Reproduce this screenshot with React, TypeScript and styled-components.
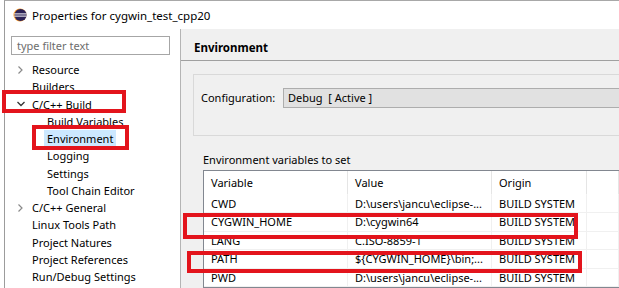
import React from 'react';
import styled, { createGlobalStyle } from 'styled-components';

const GlobalStyle = createGlobalStyle`
  html, body { margin: 0; padding: 0; background: #fff; overflow: hidden; }
  body {
    font-family: "Noto Sans", "Open Sans", sans-serif;
    font-size: 11px;
    color: #000;
  }
  * { box-sizing: border-box; }
`;

const Screen = styled.div`
  position: relative;
  width: 619px;
  height: 288px;
  padding-left: 4px;
  background: #fff;
  overflow: hidden;
`;

const Window = styled.div`
  display: flex;
  flex-direction: column;
  height: 100%;
  border-left: 1px solid #9c9c9c;
  border-top: 1px solid #a8a8a8;
`;

const TitleBar = styled.div`
  display: flex;
  align-items: center;
  gap: 5px;
  height: 28px;
  padding-left: 8px;
  font-size: 11.5px;
  background: #fff;
  white-space: nowrap;
`;

const Body = styled.div`
  display: flex;
  flex: 1;
  min-height: 0;
`;

const LeftPane = styled.div`
  width: 176px;
  flex-shrink: 0;
  padding: 7px 0 0 6px;
  background: #fff;
  border-right: 1px solid #b4b4b4;
`;

const Filter = styled.div`
  width: 159px;
  height: 19px;
  border: 1px solid #a6a6a6;
  padding-left: 5px;
  line-height: 17px;
  color: #6d6d6d;
`;

const Tree = styled.div`
  margin: 6px 0 0 -6px;
`;

const TreeRow = styled.div<{ $level: number }>`
  display: flex;
  align-items: center;
  height: 17.25px;
  padding-left: ${p => 11 + p.$level * 15}px;
  white-space: nowrap;
`;

const Chevron = styled.span`
  display: flex;
  align-items: center;
  width: 16px;
  height: 100%;
`;

const TreeLabel = styled.span<{ $selected?: boolean }>`
  display: flex;
  align-items: center;
  height: 100%;
  margin-left: -3px;
  padding: 0 3px;
  background: ${p => (p.$selected ? '#cce8ff' : 'transparent')};
`;

const RightPane = styled.div`
  flex: 1;
  min-width: 0;
  display: flex;
  flex-direction: column;
  background: #f0f0f0;
  overflow: hidden;
`;

const PageTitle = styled.div`
  height: 35px;
  padding: 11px 13px 0;
  font-size: 11.5px;
  font-weight: bold;
  line-height: 16px;
  border-bottom: 1px solid #a0a0a0;
`;

const Content = styled.div`
  padding: 13px 0 0 12px;
`;

const Group = styled.div`
  display: flex;
  align-items: flex-start;
  height: 62px;
  padding: 13px 0 0 7px;
  border: 1px solid #d9d9d9;
  border-right: none;
`;

const FieldLabel = styled.div`
  width: 82px;
  height: 20px;
  line-height: 20px;
  white-space: nowrap;
`;

const Combo = styled.div`
  flex: 1;
  height: 20px;
  padding-left: 4px;
  line-height: 18px;
  background: #e1e1e1;
  border: 1px solid #adadad;
  border-right: none;
  white-space: pre;
`;

const SectionLabel = styled.div`
  margin: 16px 0 0 10px;
  line-height: 16px;
`;

const Table = styled.div`
  display: grid;
  grid-template-columns: 144px 144px 95px 1fr;
  margin: 2px 0 0 10px;
  background: #fff;
  border: 1px solid #828790;
  border-right: none;
`;

const Cell = styled.div<{ $head?: boolean }>`
  display: flex;
  align-items: center;
  height: ${p => (p.$head ? '24px' : '18.5px')};
  padding-left: 7px;
  white-space: nowrap;
  overflow: hidden;
  border-right: 1px solid ${p => (p.$head ? '#e5e5e5' : '#f0f0f0')};
  border-bottom: 1px solid ${p => (p.$head ? 'transparent' : '#f0f0f0')};
`;

const Mark = styled.div`
  position: absolute;
  border: 4px solid #e3141c;
  pointer-events: none;
`;

const EclipseIcon = () => (
  <svg width="14" height="14" viewBox="0 0 14 14">
    <circle cx="7" cy="7" r="6.5" fill="#f7941e" />
    <circle cx="7.6" cy="7" r="6.1" fill="#2c2255" />
    <rect x="1.2" y="5.4" width="12.6" height="1" fill="#fff" />
    <rect x="1.2" y="7.6" width="12.6" height="1" fill="#fff" />
  </svg>
);

const ChevronRight = () => (
  <svg width="8" height="10" viewBox="0 0 8 10">
    <polyline points="2.5,1.5 6,5 2.5,8.5" fill="none" stroke="#8a8a8a" strokeWidth="1.2" />
  </svg>
);

const ChevronDown = () => (
  <svg width="10" height="8" viewBox="0 0 10 8">
    <polyline points="1.5,2 5,5.5 8.5,2" fill="none" stroke="#333" strokeWidth="1.3" />
  </svg>
);

type Node = { label: string; level: number; state?: 'open' | 'closed'; selected?: boolean };

const tree: Node[] = [
  { label: 'Resource', level: 0, state: 'closed' },
  { label: 'Builders', level: 0 },
  { label: 'C/C++ Build', level: 0, state: 'open' },
  { label: 'Build Variables', level: 1 },
  { label: 'Environment', level: 1, selected: true },
  { label: 'Logging', level: 1 },
  { label: 'Settings', level: 1 },
  { label: 'Tool Chain Editor', level: 1 },
  { label: 'C/C++ General', level: 0, state: 'closed' },
  { label: 'Linux Tools Path', level: 0 },
  { label: 'Project Natures', level: 0 },
  { label: 'Project References', level: 0 },
  { label: 'Run/Debug Settings', level: 0 },
];

const vars = [
  ['CWD', 'D:\\users\\jancu\\eclipse-...', 'BUILD SYSTEM'],
  ['CYGWIN_HOME', 'D:\\cygwin64', 'BUILD SYSTEM'],
  ['LANG', 'C.ISO-8859-1', 'BUILD SYSTEM'],
  ['PATH', '${CYGWIN_HOME}\\bin;...', 'BUILD SYSTEM'],
  ['PWD', 'D:\\users\\jancu\\eclipse-...', 'BUILD SYSTEM'],
];

const App = () => {
  return (
    <Screen>
      <GlobalStyle />
      <Window>
        <TitleBar>
          <EclipseIcon />
          <span>Properties for cygwin_test_cpp20</span>
        </TitleBar>
        <Body>
          <LeftPane>
            <Filter>type filter text</Filter>
            <Tree>
              {tree.map(n => (
                <TreeRow key={n.label} $level={n.level}>
                  <Chevron>
                    {n.state === 'closed' && <ChevronRight />}
                    {n.state === 'open' && <ChevronDown />}
                  </Chevron>
                  <TreeLabel $selected={n.selected}>{n.label}</TreeLabel>
                </TreeRow>
              ))}
            </Tree>
          </LeftPane>
          <RightPane>
            <PageTitle>Environment</PageTitle>
            <Content>
              <Group>
                <FieldLabel>Configuration:</FieldLabel>
                <Combo>{'Debug  [ Active ]'}</Combo>
              </Group>
              <SectionLabel>Environment variables to set</SectionLabel>
              <Table>
                <Cell $head>Variable</Cell>
                <Cell $head>Value</Cell>
                <Cell $head>Origin</Cell>
                <Cell $head />
                {vars.map(row => (
                  <React.Fragment key={row[0]}>
                    <Cell>{row[0]}</Cell>
                    <Cell>{row[1]}</Cell>
                    <Cell>{row[2]}</Cell>
                    <Cell />
                  </React.Fragment>
                ))}
              </Table>
            </Content>
          </RightPane>
        </Body>
      </Window>
      <Mark style={{ left: 2, top: 90, width: 124, height: 23 }} />
      <Mark style={{ left: 32, top: 125, width: 97, height: 25 }} />
      <Mark style={{ left: 183, top: 213, width: 395, height: 26 }} />
      <Mark style={{ left: 187, top: 251, width: 395, height: 22 }} />
    </Screen>
  );
};

export default App;
